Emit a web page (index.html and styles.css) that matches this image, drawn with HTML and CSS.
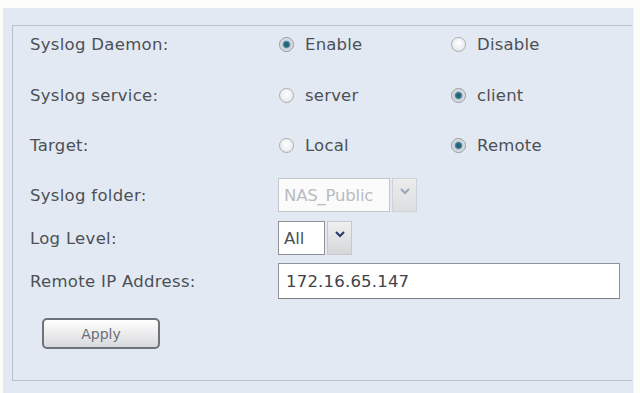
FILE: index.html
```html
<!DOCTYPE html>
<html>
<head>
<meta charset="utf-8">
<link rel="stylesheet" href="styles.css">
</head>
<body>
<div class="panel">
  <div class="box">
    <div class="row gap15">
      <div class="label">Syslog Daemon:</div>
      <div class="opt"><span class="radio on"></span>Enable</div>
      <div class="opt"><span class="radio"></span>Disable</div>
    </div>
    <div class="row gap14">
      <div class="label">Syslog service:</div>
      <div class="opt"><span class="radio"></span>server</div>
      <div class="opt"><span class="radio on"></span>client</div>
    </div>
    <div class="row gap14">
      <div class="label">Target:</div>
      <div class="opt"><span class="radio"></span>Local</div>
      <div class="opt"><span class="radio on"></span>Remote</div>
    </div>
    <div class="row gap7">
      <div class="label">Syslog folder:</div>
      <div class="select disabled">
        <div class="sel-val wide">NAS_Public</div>
        <div class="sel-arrow"><svg width="12" height="8" viewBox="0 0 12 8"><path d="M2 2 L6 6 L10 2" fill="none" stroke="#98a4bc" stroke-width="2"/></svg></div>
      </div>
    </div>
    <div class="row gap7">
      <div class="label">Log Level:</div>
      <div class="select">
        <div class="sel-val narrow">All</div>
        <div class="sel-arrow"><svg width="12" height="8" viewBox="0 0 12 8"><path d="M2 2 L6 6 L10 2" fill="none" stroke="#2c3a6e" stroke-width="2.2"/></svg></div>
      </div>
    </div>
    <div class="row">
      <div class="label">Remote IP Address:</div>
      <div class="input">172.16.65.147</div>
    </div>
    <div class="actions">
      <button class="btn">Apply</button>
    </div>
  </div>
</div>
</body>
</html>
```

FILE: styles.css
```css
html, body {
  margin: 0;
  padding: 0;
}
body {
  background: #fcfcf8;
  width: 640px;
  height: 393px;
  overflow: hidden;
  font-family: "DejaVu Sans", Verdana, sans-serif;
  font-size: 16.5px;
  color: #4c5055;
}
.panel {
  margin: 8px 6px 0 3px;
  height: 385px;
  box-sizing: border-box;
  background: #e2e9f3;
  padding: 17px 1px 0 9px;
  border-right: 1px solid #eef2f8;
}
.box {
  height: 356px;
  box-sizing: border-box;
  border: 1px solid #b9c1cc;
  border-right: none;
  display: flex;
  flex-direction: column;
}
.row {
  height: 36px;
  display: flex;
  align-items: center;
  flex: none;
}
.gap15 { margin-bottom: 15px; }
.gap14 { margin-bottom: 14px; }
.gap7 { margin-bottom: 7px; }
.label {
  width: 265px;
  padding-left: 17px;
  box-sizing: border-box;
  letter-spacing: 0.3px;
}
.opt {
  width: 172px;
  display: flex;
  align-items: center;
  letter-spacing: 0.2px;
}
.radio {
  width: 13px;
  height: 13px;
  border-radius: 50%;
  border: 1px solid #a9aeb4;
  background: radial-gradient(circle at 50% 40%, #ffffff 0%, #eceef0 60%, #d6d9dd 100%);
  margin: 0 11px 0 1px;
  flex: none;
}
.radio.on {
  background: radial-gradient(circle, #1f5a72 0%, #2f6f88 30%, #c4cdd4 45%, #eef0f2 80%);
  border-color: #8f979f;
}
.select {
  display: flex;
  align-items: stretch;
  height: 34px;
  gap: 2px;
}
.sel-val {
  border: 1px solid #8e9196;
  background: #fff;
  display: flex;
  align-items: center;
  padding-left: 5px;
  box-sizing: border-box;
}
.sel-val.wide { width: 112px; }
.sel-val.narrow { width: 47px; }
.sel-arrow {
  width: 25px;
  background: linear-gradient(#f0f0f0, #d4d6d8);
  border: 1px solid #c6c9cc;
  box-sizing: border-box;
  display: flex;
  align-items: flex-start;
  justify-content: center;
  padding-top: 8px;
}
.select.disabled .sel-val {
  border-color: #c3c7cc;
  color: #b8bcc2;
  background: #fbfbfb;
  letter-spacing: -0.2px;
}
.select.disabled .sel-arrow {
  background: linear-gradient(#ececec, #dcdee0);
  border-color: #d0d3d6;
}
.input {
  width: 342px;
  height: 36px;
  box-sizing: border-box;
  border: 1px solid #8e9196;
  border-bottom-color: #7c7f84;
  background: #fff;
  display: flex;
  align-items: center;
  padding-left: 7px;
  color: #404348;
  letter-spacing: 0.2px;
}
.actions {
  margin-top: 19px;
  padding-left: 29px;
}
.btn {
  width: 118px;
  height: 31px;
  border: 2px solid #6e737a;
  border-radius: 5px;
  background: linear-gradient(#ffffff, #e8e8ea 60%, #d8d9dc);
  font-family: "DejaVu Sans", Verdana, sans-serif;
  font-size: 14px;
  color: #6a6e74;
  padding: 0;
}
```
